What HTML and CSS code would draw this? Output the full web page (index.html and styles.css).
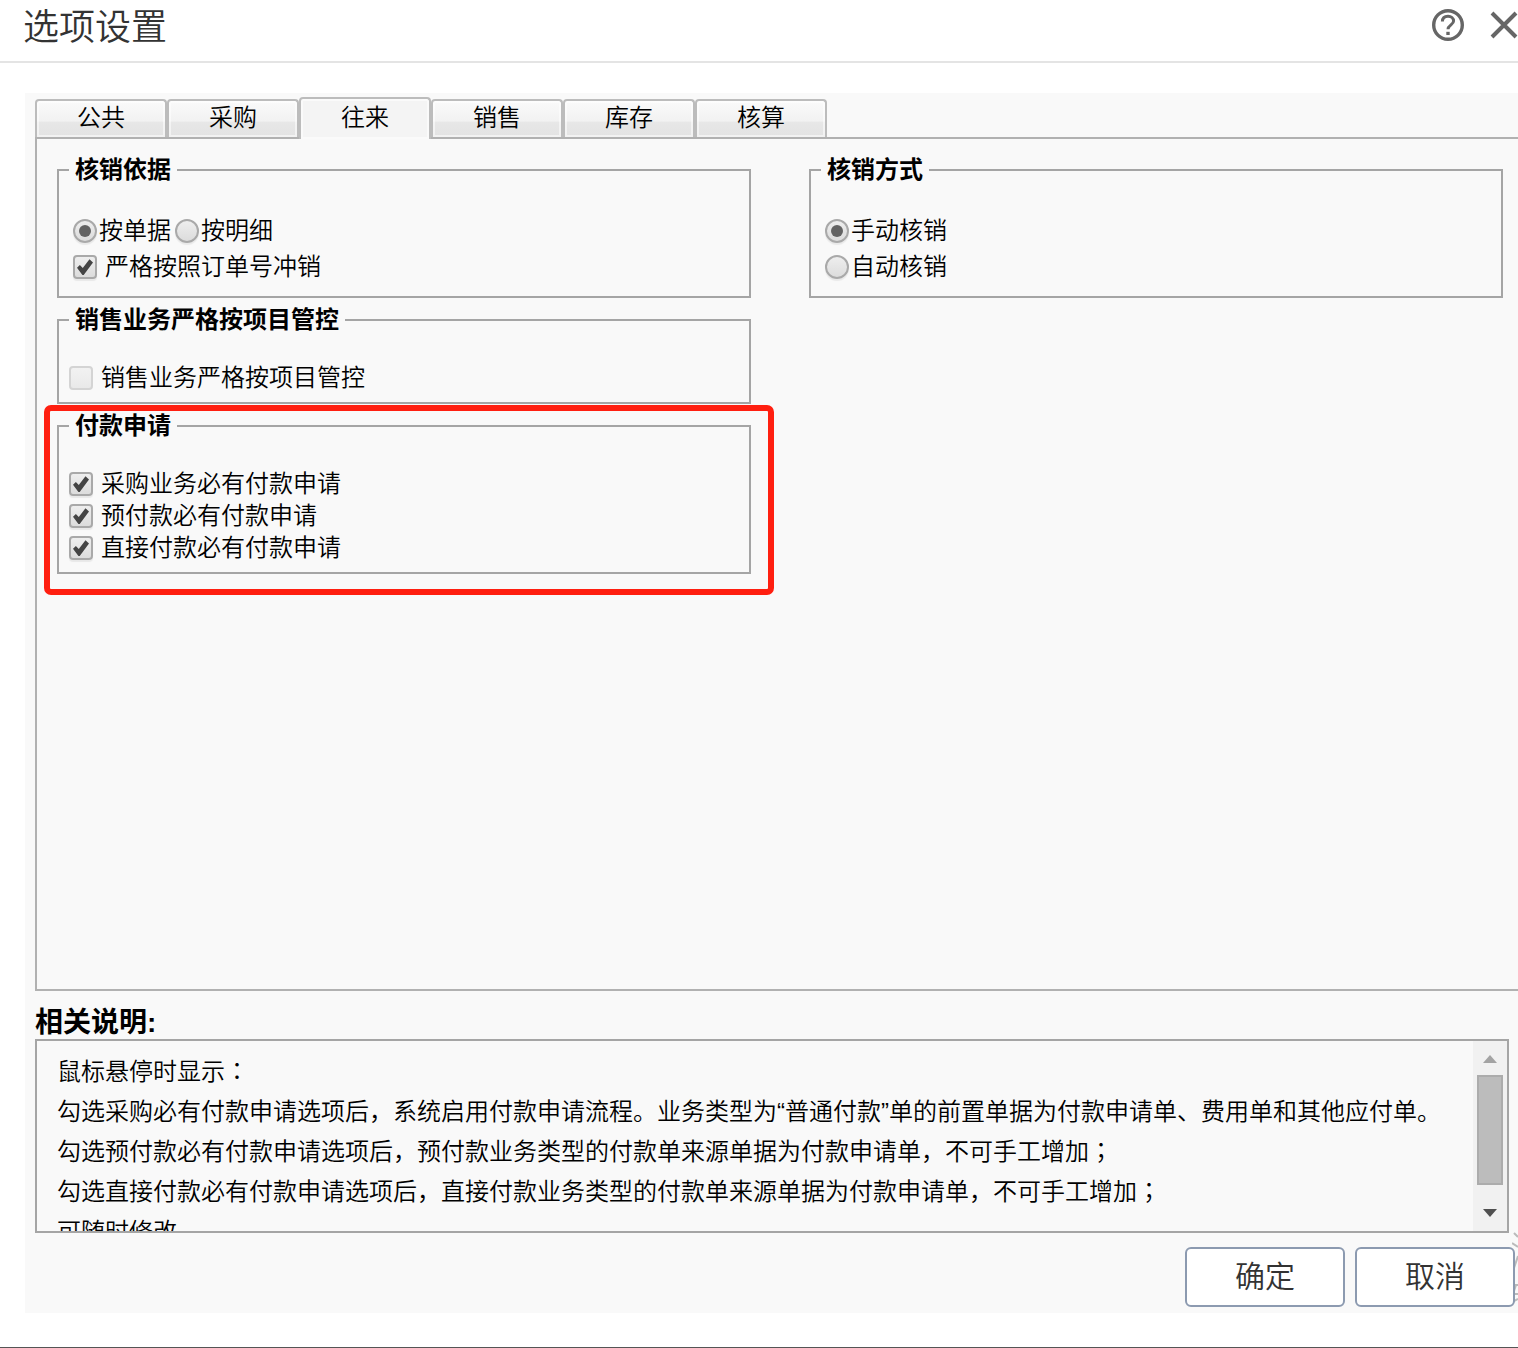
FILE: index.html
```html
<!DOCTYPE html>
<html lang="zh-CN">
<head>
<meta charset="utf-8">
<title>选项设置</title>
<link rel="stylesheet" href="styles.css">
</head>
<body>
<div class="dialog">
  <header class="dialog-header">
    <h1 class="dialog-title">选项设置</h1>
    <div class="header-actions">
      <button class="icon-button" type="button" aria-label="帮助">
        <svg width="32" height="32" viewBox="0 0 32 32" fill="none" stroke="#666" stroke-width="3.4"><circle cx="16" cy="16" r="14.3"/><path d="M10.4 12.6C10.4 9 12.8 7.2 16 7.2s5.6 1.9 5.6 4.9c0 3.6-5.6 4-5.6 8.2" stroke-width="3"/><path d="M16 22.8v3.2" stroke-width="3.4"/></svg>
      </button>
      <button class="icon-button" type="button" aria-label="关闭">
        <svg width="28" height="28" viewBox="0 0 28 28" fill="none" stroke="#666" stroke-width="4"><path d="M2 2l24 24M26 2L2 26"/></svg>
      </button>
    </div>
  </header>

  <form class="settings">
    <nav class="tabs" role="tablist">
      <button class="tab" type="button" role="tab">公共</button>
      <button class="tab" type="button" role="tab">采购</button>
      <button class="tab tab-active" type="button" role="tab" aria-selected="true">往来</button>
      <button class="tab" type="button" role="tab">销售</button>
      <button class="tab" type="button" role="tab">库存</button>
      <button class="tab" type="button" role="tab">核算</button>
    </nav>

    <section class="tab-panel">
      <div class="column">
        <fieldset class="group group-radio">
          <legend>核销依据</legend>
          <div class="row">
            <label class="radio-label"><input type="radio" name="basis" checked>按单据</label>
            <label class="radio-label"><input type="radio" name="basis">按明细</label>
          </div>
          <label class="row check-label"><input type="checkbox" checked>严格按照订单号冲销</label>
        </fieldset>
        <fieldset class="group">
          <legend>销售业务严格按项目管控</legend>
          <label class="check-label"><input type="checkbox" disabled>销售业务严格按项目管控</label>
        </fieldset>
        <div class="highlighted">
          <fieldset class="group">
            <legend>付款申请</legend>
            <label class="check-label"><input type="checkbox" checked>采购业务必有付款申请</label>
            <label class="check-label"><input type="checkbox" checked>预付款必有付款申请</label>
            <label class="check-label"><input type="checkbox" checked>直接付款必有付款申请</label>
          </fieldset>
          <div class="highlight-frame"></div>
        </div>
      </div>
      <div class="column">
        <fieldset class="group group-radio">
          <legend>核销方式</legend>
          <label class="row radio-label"><input type="radio" name="mode" checked>手动核销</label>
          <label class="row radio-label"><input type="radio" name="mode">自动核销</label>
        </fieldset>
      </div>
    </section>

    <h2 class="notes-title">相关说明:</h2>
    <div class="notes">
      <div class="notes-text">
        <p>鼠标悬停时显示<span lang="ja">：</span></p>
        <p>勾选采购必有付款申请选项后，系统启用付款申请流程。业务类型为“普通付款”单的前置单据为付款申请单、费用单和其他应付单。</p>
        <p>勾选预付款必有付款申请选项后，预付款业务类型的付款单来源单据为付款申请单，不可手工增加<span lang="ja">；</span></p>
        <p>勾选直接付款必有付款申请选项后，直接付款业务类型的付款单来源单据为付款申请单，不可手工增加<span lang="ja">；</span></p>
        <p>可随时修改</p>
      </div>
      <div class="scrollbar">
        <svg class="scroll-arrow" viewBox="0 0 34 34"><path d="M10 22l7-8 7 8z" fill="#a3a3a3"/></svg>
        <div class="scroll-track"><div class="scroll-thumb"></div></div>
        <svg class="scroll-arrow" viewBox="0 0 34 34"><path d="M10 12h14l-7 8z" fill="#505050"/></svg>
      </div>
    </div>

    <div class="actions">
      <svg class="watermark" width="6" height="72" viewBox="0 0 6 72" fill="none" stroke="#bbb" stroke-width="2"><path d="M2 2l4 4M0 12l6 4M6 25l-4 12M0 54h6M4 54l-3 9h5M0 71l6-3"/></svg>
      <button class="button" type="submit">确定</button>
      <button class="button" type="button">取消</button>
    </div>
  </form>
</div>
</body>
</html>
```
FILE: styles.css
```css
* {
  box-sizing: border-box;
}

body {
  margin: 0;
  background: #fff;
  color: #000;
  font: 350 24px/32px "Liberation Sans", "Noto Sans CJK SC", sans-serif;
}

h1,
h2,
p {
  margin: 0;
}

button,
input {
  margin: 0;
  font-family: inherit;
  font-weight: inherit;
}

.dialog {
  display: flex;
  flex-direction: column;
  min-height: 100vh;
  border-bottom: 1px solid #555;
}

.dialog-header {
  display: flex;
  align-items: center;
  justify-content: space-between;
  height: 63px;
  padding: 0 0 12px 23px;
  border-bottom: 2px solid #e4e4e4;
}

.dialog-title {
  padding-top: 6px;
  color: #333;
  font-size: 36px;
  font-weight: 350;
  line-height: 44px;
}

.header-actions {
  display: flex;
  align-items: center;
  gap: 26px;
}

.icon-button {
  display: flex;
  padding: 0;
  border: 0;
  background: none;
}

.settings {
  display: flex;
  flex: 1;
  flex-direction: column;
  margin: 30px 0 34px 25px;
  padding: 4px 0 6px 10px;
  background: #f9f9f9;
}

.tabs {
  display: flex;
  align-items: flex-end;
}

.tab {
  position: relative;
  width: 132px;
  height: 38px;
  padding: 0 0 2px;
  border: 2px solid #bcbcbc;
  border-bottom: 0;
  border-radius: 4px 4px 0 0;
  background: linear-gradient(#fafafa, #f2f2f2 55%, #e7e7e7 60%, #e3e3e3);
  box-shadow: inset 0 0 0 2px #fff8;
  color: #000;
  font-size: 24px;
  line-height: 32px;
}

.tab-active {
  z-index: 1;
  height: 42px;
  margin-bottom: -2px;
  background: #f4f4f4;
}

.tab-panel {
  display: grid;
  flex: 1;
  grid-template-columns: 1fr 1fr;
  gap: 58px;
  padding: 15px 15px 20px 20px;
  border: 2px solid #b1b1b1;
  border-right: 0;
}

.column {
  display: flex;
  flex-direction: column;
  gap: 6px;
}

.group {
  display: flex;
  flex-direction: column;
  min-width: 0;
  margin: 0;
  padding: 26px 10px 8px;
  border: 2px solid #a5a5a5;
}

.group-radio {
  padding: 27px 14px 11px;
}

.group legend {
  padding: 0 6px;
  font-weight: 700;
}

.group-radio legend {
  margin-left: -4px;
}

.row {
  display: flex;
  gap: 4px;
  min-height: 36px;
}

.radio-label {
  display: flex;
  align-items: center;
  gap: 2px;
}

.check-label {
  display: flex;
  align-items: center;
  gap: 8px;
}

input[type="radio"],
input[type="checkbox"] {
  display: grid;
  flex: none;
  place-items: center;
  width: 24px;
  height: 24px;
  border: 2px solid #a9a9a9;
  border-radius: 4px;
  background: linear-gradient(#eee, #dcdcdc);
  box-shadow: 0 2px 1px #0001;
  appearance: none;
}

input[type="radio"] {
  border-radius: 50%;
}

input[type="radio"]:checked::before {
  width: 12px;
  height: 12px;
  border-radius: 50%;
  background: #636363;
  content: "";
}

input[type="checkbox"]:checked::before {
  width: 16px;
  height: 16px;
  background: #444;
  clip-path: polygon(0 54%, 18% 38%, 36% 57%, 78% 2%, 100% 22%, 42% 100%, 34% 100%);
  content: "";
}

input[type="checkbox"]:disabled {
  border-color: #d4d4d4;
  background: linear-gradient(#f2f2f2, #e9e9e9);
  box-shadow: none;
}

.highlighted {
  position: relative;
}

.highlight-frame {
  position: absolute;
  inset: -5px -23px -21px -13px;
  border: 6px solid #ff1f10;
  border-radius: 7px;
  pointer-events: none;
}

.notes-title {
  margin-top: 16px;
  font-size: 28px;
  line-height: 32px;
}

.notes {
  display: flex;
  height: 194px;
  margin-right: 9px;
  border: 2px solid #a5a5a5;
}

.notes-text {
  flex: 1;
  min-width: 0;
  padding: 11px 0 0 20px;
  overflow: hidden;
  line-height: 40px;
}

.scrollbar {
  display: flex;
  flex: none;
  flex-direction: column;
  width: 34px;
  background: #f1f1f1;
}

.scroll-arrow {
  width: 34px;
  height: 34px;
}

.scroll-track {
  flex: 1;
  padding: 0 4px;
}

.scroll-thumb {
  height: 110px;
  border: 2px solid #acacac;
  background: #bcbcbc;
}

.actions {
  position: relative;
  display: flex;
  justify-content: flex-end;
  gap: 10px;
  padding: 14px 3px 0 0;
}

.watermark {
  position: absolute;
  top: -2px;
  right: 0;
}

.button {
  position: relative;
  width: 160px;
  height: 60px;
  padding: 0 0 6px;
  border: 2px solid #8c9ab0;
  border-radius: 6px;
  background: #fff;
  color: #333;
  font-size: 30px;
}
```
